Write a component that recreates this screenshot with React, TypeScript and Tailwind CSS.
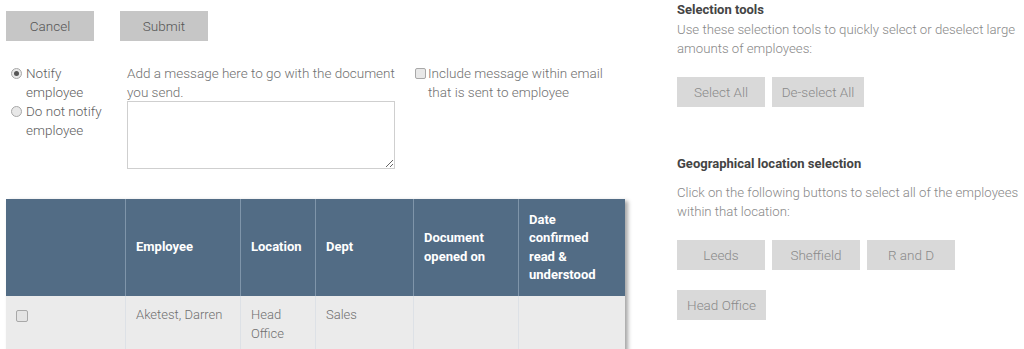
import React from 'react';

const cols = [
  { label: '', w: 'w-[119px]' },
  { label: 'Employee', w: 'w-[115px]' },
  { label: 'Location', w: 'w-[75px]' },
  { label: 'Dept', w: 'w-[98px]' },
  { label: 'Document opened on', w: 'w-[105px]' },
  { label: 'Date confirmed read & understood', w: 'w-[107px]' },
];

const GreyButton = ({ children, className = '' }: { children: React.ReactNode; className?: string }) => (
  <button className={`h-[30px] bg-[#d9d9d9] text-[#8a8a8a] text-[13.5px] font-light ${className}`}>{children}</button>
);

const App: React.FC = () => {
  return (
    <div className="w-[1024px] h-[349px] overflow-hidden bg-white flex font-['Roboto',sans-serif] text-[13.5px] font-light text-[#707070]">
      {/* left column */}
      <div className="w-[677px] shrink-0 pl-[6px]">
        <div className="flex gap-[26px] pt-[11px]">
          <button className="w-[88px] h-[30px] bg-[#c6c6c6] text-[#555] text-[13.5px] font-light">Cancel</button>
          <button className="w-[88px] h-[30px] bg-[#c6c6c6] text-[#555] text-[13.5px] font-light">Submit</button>
        </div>

        <div className="flex mt-[23px]">
          <div className="w-[121px] pl-[5px] leading-[19px] text-[#606060]">
            <label className="flex items-start">
              <span className="mt-[4px] mr-[4px] w-[11px] h-[11px] rounded-full border border-[#a8a8a8] bg-[#e8e8e8] flex items-center justify-center">
                <span className="w-[5px] h-[5px] rounded-full bg-[#555]" />
              </span>
              <span>Notify<br />employee</span>
            </label>
            <label className="flex items-start">
              <span className="mt-[4px] mr-[4px] w-[11px] h-[11px] rounded-full border border-[#a8a8a8] bg-[#e8e8e8]" />
              <span>Do not notify<br />employee</span>
            </label>
          </div>

          <div className="w-[288px] leading-[19px]">
            <div className="w-[275px]">Add a message here to go with the document you send.</div>
            <textarea className="mt-[-1px] w-[268px] h-[68px] border border-[#cfcfcf] resize-y block" />
          </div>

          <label className="flex items-start leading-[19px]">
            <span className="mt-[4px] mr-[2px] w-[11px] h-[11px] rounded-[2px] border border-[#a8a8a8] bg-[#e8e8e8] shrink-0" />
            <span>Include message within email<br />that is sent to employee</span>
          </label>
        </div>

        <div className="mt-[30px] w-[619px] shadow-[3px_2px_4px_rgba(0,0,0,0.35)]">
          <div className="flex h-[97px] bg-[#526c85] text-white font-bold text-[13px] leading-[18.5px]">
            {cols.map((c, i) => (
              <div
                key={i}
                className={`${c.w} shrink-0 flex items-center px-[10px] ${i > 0 ? 'border-l border-[#7f95aa]' : ''}`}
              >
                {c.label}
              </div>
            ))}
          </div>
          <div className="flex h-[60px] bg-[#ebebeb] leading-[19px] text-[13px]">
            <div className="w-[119px] shrink-0 pl-[10px] pt-[14px]">
              <span className="block w-[12px] h-[12px] rounded-[2px] border border-[#a8a8a8] bg-[#e4e4e4]" />
            </div>
            <div className="w-[115px] shrink-0 border-l border-[#dde1e6] px-[10px] pt-[9px]">Aketest, Darren</div>
            <div className="w-[75px] shrink-0 border-l border-[#dde1e6] px-[10px] pt-[9px]">Head<br />Office</div>
            <div className="w-[98px] shrink-0 border-l border-[#dde1e6] px-[10px] pt-[9px]">Sales</div>
            <div className="w-[105px] shrink-0 border-l border-[#dde1e6]" />
            <div className="w-[107px] shrink-0 border-l border-[#dde1e6]" />
          </div>
        </div>
      </div>

      {/* right column */}
      <div className="flex-1 leading-[19px]">
        <div className="font-bold text-[13px] text-[#444]">Selection tools</div>
        <p className="mt-[1px] text-[#888] text-[13.2px]">Use these selection tools to quickly select or deselect large amounts of employees:</p>
        <div className="flex gap-[7px] mt-[19px]">
          <GreyButton className="w-[88px]">Select All</GreyButton>
          <GreyButton className="w-[92px]">De-select All</GreyButton>
        </div>

        <div className="mt-[47px] font-bold text-[13px] text-[#444]">Geographical location selection</div>
        <p className="mt-[10px] text-[#888] text-[13.2px]">Click on the following buttons to select all of the employees within that location:</p>
        <div className="flex flex-wrap gap-x-[7px] gap-y-[20px] mt-[19px] w-[300px]">
          <GreyButton className="w-[88px]">Leeds</GreyButton>
          <GreyButton className="w-[88px]">Sheffield</GreyButton>
          <GreyButton className="w-[88px]">R and D</GreyButton>
          <GreyButton className="w-[89px]">Head Office</GreyButton>
        </div>
      </div>
    </div>
  );
};

export default App;
